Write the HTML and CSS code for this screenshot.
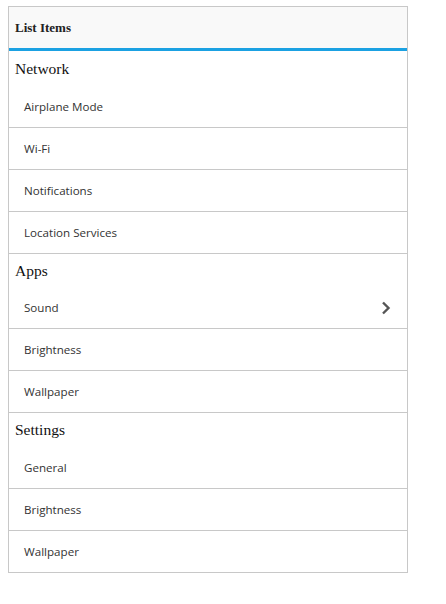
FILE: index.html
```html
<!DOCTYPE html>
<html>
<head>
<meta charset="utf-8">
<link rel="stylesheet" href="styles.css">
</head>
<body>
<div class="listview">
  <div class="lv-header">List Items</div>
  <div class="lv-group lv-group-first">Network</div>
  <div class="lv-item">Airplane Mode</div>
  <div class="lv-item">Wi-Fi</div>
  <div class="lv-item">Notifications</div>
  <div class="lv-item">Location Services</div>
  <div class="lv-group lv-group-short">Apps</div>
  <div class="lv-item">Sound
    <svg class="chev" width="10" height="14" viewBox="0 0 10 14"><path d="M2 1.5 L7.5 7 L2 12.5" fill="none" stroke="#555" stroke-width="2.4"/></svg>
  </div>
  <div class="lv-item">Brightness</div>
  <div class="lv-item">Wallpaper</div>
  <div class="lv-group">Settings</div>
  <div class="lv-item">General</div>
  <div class="lv-item">Brightness</div>
  <div class="lv-item">Wallpaper</div>
</div>
</body>
</html>
```
FILE: styles.css
```css
html, body {
  margin: 0;
  padding: 0;
  background: #fff;
}
body {
  padding: 6px 8px;
}
.listview {
  width: 398px;
  border: 1px solid #c8c8c8;
  border-bottom: none;
  background: #fff;
}
.lv-header {
  height: 41px;
  display: flex;
  align-items: center;
  padding-left: 6px;
  background: #f9f9f9;
  border-bottom: 3px solid #1ba1e2;
  font-family: "Liberation Serif", serif;
  font-weight: bold;
  font-size: 13px;
  color: #222;
}
.lv-group {
  height: 34px;
  display: flex;
  align-items: center;
  padding-left: 6px;
  font-family: "Liberation Serif", serif;
  font-size: 15.5px;
  color: #111;
}
.lv-group-first {
  height: 35px;
}
.lv-group-short {
  height: 33px;
}
.lv-item {
  height: 41px;
  display: flex;
  align-items: center;
  justify-content: space-between;
  padding: 0 16px 0 15px;
  border-bottom: 1px solid #c8c8c8;
  font-family: "Open Sans", sans-serif;
  font-size: 11.6px;
  color: #333;
}
.chev {
  display: block;
}
```
